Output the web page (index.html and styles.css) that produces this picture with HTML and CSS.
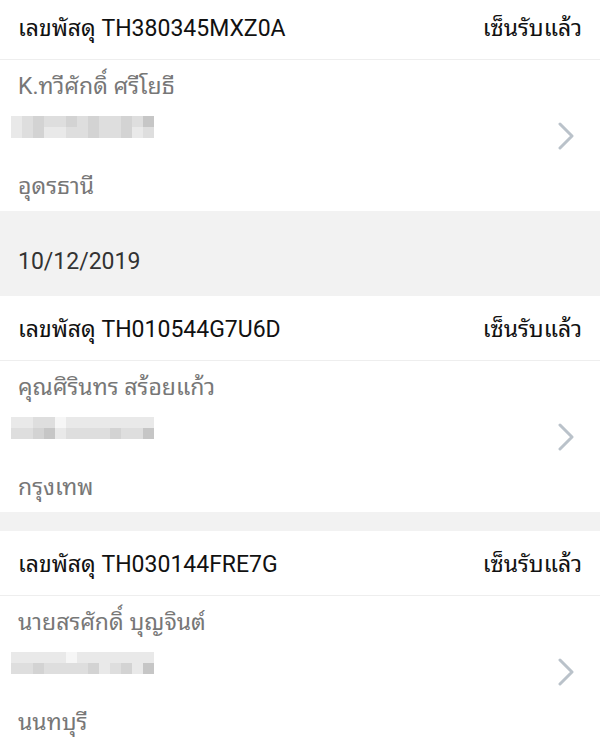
FILE: index.html
```html
<!DOCTYPE html>
<html lang="th">
<head>
  <meta charset="UTF-8" />
  <meta name="viewport" content="width=device-width, initial-scale=1.0"/>
  <title>Parcels</title>
  <link rel="stylesheet" href="styles.css">
</head>
<body>
  <div class="list">
    <div class="card">
      <div class="card-head">
        <span>เลขพัสดุ TH380345MXZ0A</span>
        <span>เซ็นรับแล้ว</span>
      </div>
      <div class="card-body">
        <div class="info">
          <div class="name">K.ทวีศักดิ์ ศรีโยธี</div>
          <div class="blur">
            <span class="s1"></span><span class="s2"></span><span class="s3"></span><span class="s2"></span><span class="s2"></span><span class="s3"></span><span class="s2"></span><span class="s3"></span><span class="s2"></span><span class="s2"></span><span class="s3"></span><span class="s2"></span><span class="s4"></span>
            <span class="s1"></span><span class="s2"></span><span class="s3"></span><span class="s1"></span><span class="s1"></span><span class="s2"></span><span class="s2"></span><span class="s3"></span><span class="s2"></span><span class="s2"></span><span class="s3"></span><span class="s1"></span><span class="s2"></span>
          </div>
          <div class="city">อุดรธานี</div>
        </div>
        <svg class="chev" width="16" height="28" viewBox="0 0 16 28"><polyline points="2,2 14,14 2,26" fill="none" stroke="#bac2ca" stroke-width="3" stroke-linecap="round" stroke-linejoin="round"/></svg>
      </div>
    </div>

    <div class="day">10/12/2019</div>

    <div class="card">
      <div class="card-head">
        <span>เลขพัสดุ TH010544G7U6D</span>
        <span>เซ็นรับแล้ว</span>
      </div>
      <div class="card-body">
        <div class="info">
          <div class="name">คุณศิรินทร สร้อยแก้ว</div>
          <div class="blur">
            <span class="s1"></span><span class="s1"></span><span class="s2"></span><span class="s2"></span><span class="s0"></span><span class="s1"></span><span class="s1"></span><span class="s1"></span><span class="s1"></span><span class="s1"></span><span class="s1"></span><span class="s1"></span><span class="s1"></span>
            <span class="s2"></span><span class="s2"></span><span class="s3"></span><span class="s4"></span><span class="s1"></span><span class="s2"></span><span class="s2"></span><span class="s2"></span><span class="s2"></span><span class="s3"></span><span class="s2"></span><span class="s2"></span><span class="s4"></span>
          </div>
          <div class="city">กรุงเทพ</div>
        </div>
        <svg class="chev" width="16" height="28" viewBox="0 0 16 28"><polyline points="2,2 14,14 2,26" fill="none" stroke="#bac2ca" stroke-width="3" stroke-linecap="round" stroke-linejoin="round"/></svg>
      </div>
    </div>

    <div class="gap"></div>

    <div class="card">
      <div class="card-head">
        <span>เลขพัสดุ TH030144FRE7G</span>
        <span>เซ็นรับแล้ว</span>
      </div>
      <div class="card-body">
        <div class="info">
          <div class="name">นายสรศักดิ์ บุญจินต์</div>
          <div class="blur">
            <span class="s1"></span><span class="s1"></span><span class="s1"></span><span class="s1"></span><span class="s1"></span><span class="s0"></span><span class="s1"></span><span class="s1"></span><span class="s1"></span><span class="s1"></span><span class="s1"></span><span class="s1"></span><span class="s1"></span>
            <span class="s2"></span><span class="s2"></span><span class="s3"></span><span class="s2"></span><span class="s2"></span><span class="s2"></span><span class="s2"></span><span class="s3"></span><span class="s1"></span><span class="s2"></span><span class="s3"></span><span class="s1"></span><span class="s4"></span>
          </div>
          <div class="city">นนทบุรี</div>
        </div>
        <svg class="chev" width="16" height="28" viewBox="0 0 16 28"><polyline points="2,2 14,14 2,26" fill="none" stroke="#bac2ca" stroke-width="3" stroke-linecap="round" stroke-linejoin="round"/></svg>
      </div>
    </div>
  </div>
</body>
</html>
```

FILE: styles.css
```css
body {
  margin: 0;
  padding: 0;
  background: #fff;
  font-family: Roboto, "Noto Sans Thai Looped", "Noto Sans Thai", "Noto Sans", "DejaVu Sans", sans-serif;
  font-size: 23px;
}
.list {
  margin-top: -5px;
}
.card {
  background: #fff;
}
.card-head {
  height: 64px;
  box-sizing: content-box;
  display: flex;
  align-items: center;
  justify-content: space-between;
  padding: 0 18px;
  border-bottom: 1px solid #eeeeee;
  color: #111;
}
.card-head span {
  margin-bottom: 4px;
}
.card-body {
  height: 151px;
  display: flex;
  align-items: center;
  justify-content: space-between;
  padding: 0 26px 0 18px;
  box-sizing: border-box;
}
.info {
  align-self: stretch;
  padding-top: 10px;
}
.name, .city {
  height: 34px;
  line-height: 34px;
  color: #777;
}
.blur {
  display: grid;
  grid-template-columns: repeat(13, 11px);
  grid-auto-rows: 11px;
  margin: 12px 0 0 -7px;
}
.s0 { background: #f6f6f6; }
.s1 { background: #e9e9e9; }
.s2 { background: #dedede; }
.s3 { background: #d3d3d3; }
.s4 { background: #c6c6c6; }
.city {
  margin-top: 32px;
}
.day {
  height: 85px;
  box-sizing: border-box;
  padding: 37px 18px 0;
  line-height: 28px;
  background: #f2f2f2;
  color: #333;
}
.gap {
  height: 19px;
  background: #f2f2f2;
}
```
